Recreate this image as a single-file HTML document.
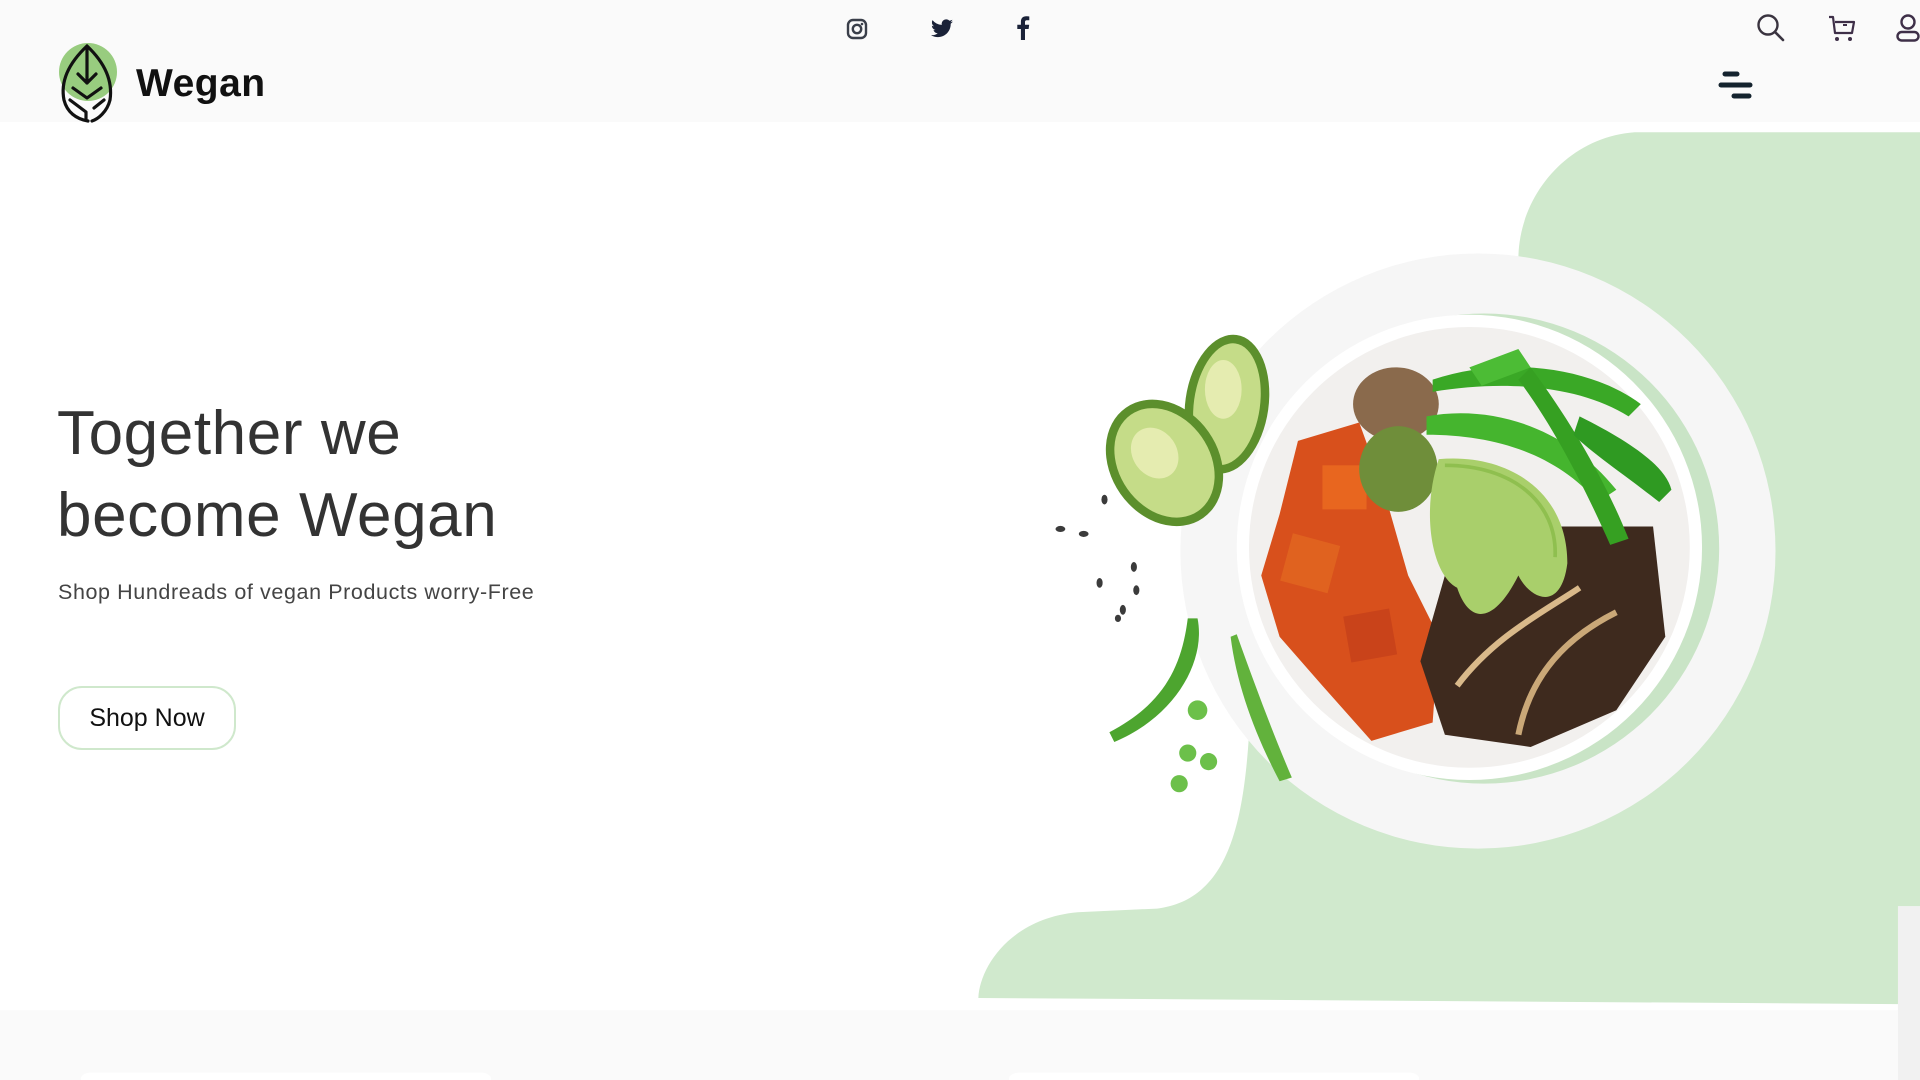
<!DOCTYPE html>
<html><head><meta charset="utf-8"><style>
*{margin:0;padding:0;box-sizing:border-box}
body{width:1920px;height:1080px;overflow:hidden;background:#fff;font-family:"Liberation Sans",sans-serif;position:relative}
.hdr{position:absolute;left:0;top:0;width:1920px;height:122px;background:#fafafa}
.abs{position:absolute}
h1{position:absolute;left:57px;top:393px;font-size:62px;line-height:82px;font-weight:500;color:#333;letter-spacing:0.6px}
.sub{position:absolute;left:58px;top:580px;font-size:21.5px;color:#444;letter-spacing:0.6px}
.btn{position:absolute;left:58px;top:686px;width:178px;height:64px;border:2px solid #cfe8cc;border-radius:24px;font-size:25px;color:#111;display:flex;align-items:center;justify-content:center}
.logo{position:absolute;left:136px;top:62px;font-size:39px;font-weight:bold;color:#111;letter-spacing:0.5px}
</style></head><body>
<div class="hdr"></div>
<svg class="abs" style="left:0;top:0" width="1920" height="1080" viewBox="0 0 1568 882" preserveAspectRatio="none">
<rect x="0" y="825" width="1550" height="57" fill="#fafafa"/>
<rect x="1550" y="740" width="18" height="142" fill="#f1f1f1"/>
<rect x="66" y="876" width="335" height="10" rx="8" fill="#fff"/>
<rect x="824" y="876" width="335" height="10" rx="8" fill="#fff"/>
<path d="M1568,108 L1335,108 C1280,112 1240,160 1240,212 L1240,300 L1020,600 C1015,680 1000,735 945,742 L880,745 C825,750 800,790 799,815 L1550,820 L1550,740 L1568,740 Z" fill="#d0e9cd"/>
<circle cx="1207" cy="450" r="243" fill="#f6f6f6"/>
<circle cx="1212" cy="448" r="192" fill="#c9e4c6"/>
<circle cx="1200" cy="447" r="190" fill="#fff"/>
<circle cx="1200" cy="447" r="180" fill="#f2f0ee"/>
<ellipse cx="1140" cy="330" rx="35" ry="30" fill="#8a6a4c"/>
<path d="M1060,360 L1110,345 L1130,400 L1150,470 L1175,520 L1170,590 L1120,605 L1080,560 L1045,520 L1030,470 L1045,420 Z" fill="#d8501c"/>
<rect x="1050" y="440" width="40" height="40" fill="#e0621f" transform="rotate(15 1070 460)"/>
<rect x="1100" y="500" width="38" height="38" fill="#c9431a" transform="rotate(-10 1119 519)"/>
<rect x="1080" y="380" width="36" height="36" fill="#e8661f"/>
<ellipse cx="1142" cy="383" rx="32" ry="35" fill="#6f8e3a"/>
<path d="M1180,470 L1270,430 L1350,430 L1360,520 L1320,580 L1250,610 L1180,600 L1160,540 Z" fill="#3e2a1e"/>
<path d="M1190,560 C1220,520 1260,500 1290,480" stroke="#d9b98a" stroke-width="5" fill="none"/>
<path d="M1240,600 C1250,550 1280,520 1320,500" stroke="#caa878" stroke-width="5" fill="none"/>
<path d="M1175,375 C1230,370 1280,400 1280,460 C1275,500 1250,490 1240,470 C1220,510 1200,510 1190,480 C1170,470 1160,420 1175,375Z" fill="#a9cf6b"/>
<path d="M1180,380 C1235,380 1272,410 1270,455" stroke="#8fbf4f" stroke-width="3" fill="none"/>
<path d="M1170,310 C1230,290 1300,300 1340,330 L1330,340 C1290,315 1230,310 1170,320Z" fill="#3aa826"/>
<path d="M1165,340 C1220,330 1280,350 1320,400 L1305,410 C1270,370 1220,355 1165,355Z" fill="#45b52e"/>
<path d="M1250,300 C1280,340 1310,390 1330,440 L1315,445 C1295,400 1270,350 1240,310Z" fill="#36a022"/>
<path d="M1290,340 C1330,360 1360,380 1365,400 L1355,410 C1330,390 1300,370 1285,355Z" fill="#2f9a22"/>
<path d="M1200,300 L1240,285 L1250,300 L1210,315Z" fill="#4cbc35"/>
<ellipse cx="1002" cy="330" rx="34" ry="57" fill="#5c8f2c" transform="rotate(8 1002 330)"/>
<ellipse cx="1002" cy="330" rx="27" ry="50" fill="#c5dc88" transform="rotate(8 1002 330)"/>
<ellipse cx="999" cy="318" rx="15" ry="24" fill="#e5ecb0"/>
<ellipse cx="951" cy="378" rx="44" ry="55" fill="#5c8f2c" transform="rotate(-35 951 378)"/>
<ellipse cx="951" cy="378" rx="37" ry="48" fill="#c5dc88" transform="rotate(-35 951 378)"/>
<ellipse cx="943" cy="370" rx="18" ry="22" fill="#e5ecb0" transform="rotate(-35 943 370)"/>
<g fill="#3b3b3b"><ellipse cx="902" cy="408" rx="2.5" ry="4"/><ellipse cx="866" cy="432" rx="4" ry="2.5"/><ellipse cx="885" cy="436" rx="4" ry="2.5"/><ellipse cx="926" cy="463" rx="2.5" ry="4"/><ellipse cx="898" cy="476" rx="2.5" ry="4"/><ellipse cx="928" cy="482" rx="2.5" ry="4"/><ellipse cx="917" cy="498" rx="2.5" ry="4"/><ellipse cx="913" cy="505" rx="2.5" ry="3"/></g>
<path d="M978,505 C985,540 960,585 910,606 L906,598 C950,575 965,545 970,505Z" fill="#4da52f"/>
<path d="M1010,518 C1025,560 1040,600 1055,635 L1045,638 C1025,600 1010,560 1005,520Z" fill="#62b23c"/>
<g fill="#6cc04a"><circle cx="978" cy="580" r="8"/><circle cx="970" cy="615" r="7"/><circle cx="987" cy="622" r="7"/><circle cx="963" cy="640" r="7"/></g>
</svg>
<svg class="abs" style="left:0;top:0" width="130" height="130" viewBox="0 0 130 130">
<circle cx="88" cy="72" r="29" fill="#98cc7f"/>
<g fill="none" stroke="#111" stroke-width="3.2" stroke-linecap="round" stroke-linejoin="round">
<path d="M87,46 C70,62 60,80 64,100 C67,112 76,119 88,121 M87,46 C104,62 113,80 110,100 C107,112 98,119 92,121"/>
<path d="M87,47 V83 M78,74 L87,83 L96,74"/>
<path d="M73,88 L87,98 L101,88"/>
<path d="M70,100 L86,112 L86,120 M104,100 L94,108"/>
</g>
</svg>
<div class="logo">Wegan</div>
<svg class="abs" style="left:846px;top:18px" width="22" height="22" viewBox="0 0 22 22"><rect x="2" y="2" width="18" height="18" rx="5" fill="none" stroke="#3a3f4a" stroke-width="2.4"/><circle cx="11" cy="11" r="4.2" fill="none" stroke="#3a3f4a" stroke-width="2.4"/><circle cx="16" cy="6" r="1.3" fill="#3a3f4a"/></svg>
<svg class="abs" style="left:930px;top:18px" width="24" height="22" viewBox="0 0 24 20"><path d="M23,2.5c-.8.4-1.7.6-2.6.7.9-.6 1.6-1.4 2-2.5-.9.5-1.9.9-2.9 1.1A4.5,4.5 0 0 0 11.8,5.9 12.8,12.8 0 0 1 2.5,1.1 4.5,4.5 0 0 0 3.9,7.2c-.7 0-1.4-.2-2-.6 0,2.2 1.6,4 3.6,4.4-.7.2-1.4.2-2 .1.6,1.8 2.2,3.1 4.2,3.1A9,9 0 0 1 1,16.1 12.8,12.8 0 0 0 7.9,18.1c8.300,0 12.8-6.9 12.8-12.8v-.6c.9-.6 1.7-1.4 2.3-2.2z" fill="#1a2238"/></svg>
<svg class="abs" style="left:1016px;top:16px" width="14" height="24" viewBox="0 0 14 24"><path d="M9,24V13h3.6l.6-4.2H9V6.2c0-1.2.3-2 2.1-2h2.2V.5C12.9.4 11.6.3 10.2.3 7,.3 4.9,2.2 4.9,5.7v3.1H1.3V13h3.6v11z" fill="#1a2238"/></svg>
<svg class="abs" style="left:1756px;top:13px" width="30" height="30" viewBox="0 0 30 30"><circle cx="12" cy="12" r="9.5" fill="none" stroke="#3a3440" stroke-width="2.4"/><path d="M19,19 L27,27" stroke="#3a3440" stroke-width="2.6" stroke-linecap="round"/></svg>
<svg class="abs" style="left:1828px;top:14px" width="28" height="28" viewBox="0 0 28 28"><path d="M1,3 H5 L7,19 H24 L26,8 H7" fill="none" stroke="#3e2f48" stroke-width="2.2" stroke-linejoin="round"/><path d="M15,11 H19" stroke="#3e2f48" stroke-width="2"/><circle cx="9" cy="25" r="2" fill="#3e2f48"/><circle cx="22" cy="25" r="2" fill="#3e2f48"/></svg>
<svg class="abs" style="left:1896px;top:13px" width="24" height="30" viewBox="0 0 24 30"><circle cx="12" cy="9" r="6.5" fill="none" stroke="#3e2f48" stroke-width="2.4"/><rect x="1.5" y="19" width="21" height="8.5" rx="4.2" fill="none" stroke="#3e2f48" stroke-width="2.4"/></svg>
<svg class="abs" style="left:1718px;top:70px" width="36" height="30" viewBox="0 0 36 30"><g stroke="#14232e" stroke-width="5" stroke-linecap="round"><path d="M7,4 H19"/><path d="M3,15 H32"/><path d="M16,26 H31"/></g></svg>
<h1>Together we<br>become Wegan</h1>
<div class="sub">Shop Hundreads of vegan Products worry-Free</div>
<div class="btn">Shop Now</div>
</body></html>
